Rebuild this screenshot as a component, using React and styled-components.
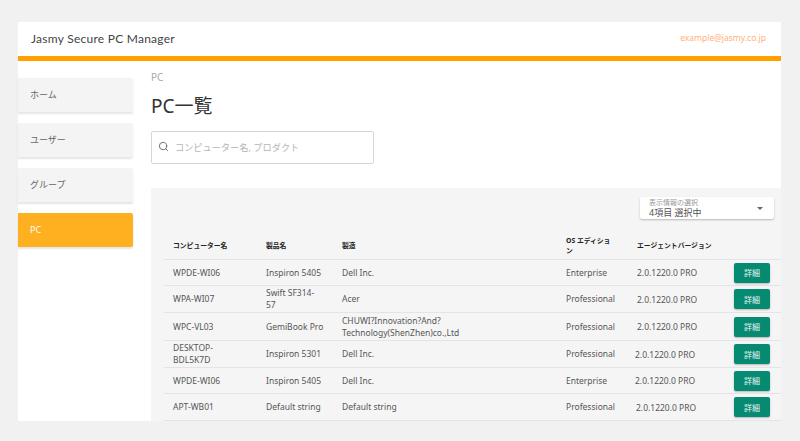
import React from 'react';
import styled, { createGlobalStyle } from 'styled-components';
import { Search } from 'lucide-react';

const GlobalStyle = createGlobalStyle`
  html, body {
    margin: 0;
    padding: 0;
    background: #f1f1f1;
  }
`;

const navItems = ['ホーム', 'ユーザー', 'グループ', 'PC'];

const pcRows = [
  { name: 'WPDE-WI06', product: 'Inspiron 5405', maker: 'Dell Inc.', os: 'Enterprise', shift: 0, h: 26 },
  { name: 'WPA-WI07', product: 'Swift SF314-57', maker: 'Acer', os: 'Professional', shift: 0, h: 27 },
  { name: 'WPC-VL03', product: 'GemiBook\u00a0Pro', maker: 'CHUWI?Innovation?And?Technology(ShenZhen)co.,Ltd', os: 'Professional', shift: 0, h: 28 },
  { name: 'DESKTOP-BDL5K7D', product: 'Inspiron 5301', maker: 'Dell Inc.', os: 'Professional', shift: -2, h: 27 },
  { name: 'WPDE-WI06', product: 'Inspiron 5405', maker: 'Dell Inc.', os: 'Enterprise', shift: -2, h: 26 },
  { name: 'APT-WB01', product: 'Default string', maker: 'Default string', os: 'Professional', shift: -1, h: 27 },
];

const App = () => (
  <Page>
    <GlobalStyle />
    <Window>
      <Header>
        <Brand>Jasmy Secure PC Manager</Brand>
        <Email>example@jasmy.co.jp</Email>
      </Header>
      <Body>
        <Sidebar>
          {navItems.map((item) => (
            <NavItem key={item} $active={item === 'PC'}>{item}</NavItem>
          ))}
        </Sidebar>
        <Main>
          <Crumb>PC</Crumb>
          <Title>PC一覧</Title>
          <SearchBox>
            <Search size={11} strokeWidth={2} color="#666" />
            <SearchHint>コンピューター名, プロダクト</SearchHint>
          </SearchBox>
          <Panel>
            <PanelTop>
              <ColumnSelect>
                <SelectLabel>表示情報の選択</SelectLabel>
                <SelectValue>4項目 選択中</SelectValue>
                <Caret />
              </ColumnSelect>
            </PanelTop>
            <Table>
              <colgroup>
                <col style={{ width: 93 }} />
                <col style={{ width: 76 }} />
                <col style={{ width: 224 }} />
                <col style={{ width: 71 }} />
                <col style={{ width: 98 }} />
                <col />
              </colgroup>
              <thead>
                <tr>
                  <HeadCell>コンピューター名</HeadCell>
                  <HeadCell>製品名</HeadCell>
                  <HeadCell>製造</HeadCell>
                  <HeadCell $narrow>OS エディション</HeadCell>
                  <HeadCell>エージェントバージョン</HeadCell>
                  <HeadCell />
                </tr>
              </thead>
              <tbody>
                {pcRows.map((row, index) => (
                  <tr key={index} style={{ height: row.h }}>
                    <Cell>{row.name}</Cell>
                    <ProductCell>{row.product}</ProductCell>
                    <MakerCell>{row.maker}</MakerCell>
                    <Cell>{row.os}</Cell>
                    <Cell>
                      <Version $shift={row.shift}>2.0.1220.0 PRO</Version>
                    </Cell>
                    <ActionCell>
                      <DetailButton>詳細</DetailButton>
                    </ActionCell>
                  </tr>
                ))}
              </tbody>
            </Table>
          </Panel>
        </Main>
      </Body>
    </Window>
  </Page>
);

const Page = styled.div`
  width: 800px;
  height: 441px;
  padding: 22px 19px 20px 18px;
  box-sizing: border-box;
  overflow: hidden;
  background: #f1f1f1;
  font-family: "Noto Sans", "Noto Sans CJK JP", sans-serif;
`;

const Window = styled.div`
  height: 399px;
  background: #fff;
  display: flex;
  flex-direction: column;
`;

const Header = styled.header`
  height: 34px;
  flex: none;
  box-sizing: content-box;
  border-bottom: 5px solid #ffa000;
  display: flex;
  align-items: center;
  justify-content: space-between;
  padding: 0 15px 0 13px;
`;

const Brand = styled.div`
  font-family: Lato, "Noto Sans", sans-serif;
  font-size: 12px;
  letter-spacing: 0.25px;
  color: #444;
  margin-top: -2px;
`;

const Email = styled.div`
  font-size: 8.5px;
  color: #ffb27a;
  margin-top: -3px;
`;

const Body = styled.div`
  flex: 1;
  min-height: 0;
  display: flex;
`;

const Sidebar = styled.nav`
  width: 115px;
  flex: none;
  padding-top: 17px;
  display: flex;
  flex-direction: column;
  gap: 11px;
`;

const NavItem = styled.div`
  height: 34px;
  box-sizing: border-box;
  padding: 0 0 2px 12px;
  display: flex;
  align-items: center;
  font-size: 9px;
  background: ${({ $active }) => ($active ? '#ffb020' : '#f4f4f4')};
  color: ${({ $active }) => ($active ? '#fff' : '#666')};
  border-radius: 0 2px 2px 0;
  box-shadow: 0 2px 2px rgba(0, 0, 0, 0.1);
`;

const Main = styled.main`
  flex: 1;
  min-width: 0;
  margin-left: 18px;
  display: flex;
  flex-direction: column;
`;

const Crumb = styled.div`
  margin-top: 9px;
  height: 14px;
  line-height: 14px;
  font-size: 10px;
  color: #aaa;
`;

const Title = styled.h1`
  margin: 8px 0 0;
  height: 28px;
  line-height: 28px;
  font-size: 19px;
  font-weight: 400;
  color: #333;
`;

const SearchBox = styled.div`
  margin-top: 11px;
  width: 223px;
  height: 33px;
  box-sizing: border-box;
  flex: none;
  border: 1px solid #d6d6d6;
  border-radius: 2px;
  display: flex;
  align-items: center;
  gap: 6px;
  padding: 0 0 2px 6px;
`;

const SearchHint = styled.span`
  font-size: 9.2px;
  color: #b5b5b5;
`;

const Panel = styled.section`
  margin-top: 24px;
  flex: 1;
  min-height: 0;
  background: #f5f5f5;
  padding-left: 13px;
  overflow: hidden;
`;

const PanelTop = styled.div`
  display: flex;
  justify-content: flex-end;
  padding: 9px 7px 0 0;
  height: 22px;
`;

const ColumnSelect = styled.div`
  position: relative;
  width: 134px;
  height: 22px;
  box-sizing: border-box;
  padding: 2px 0 0 9px;
  background: #fff;
  border-radius: 2px;
  box-shadow: 0 1px 2px rgba(0, 0, 0, 0.25);
`;

const SelectLabel = styled.div`
  font-size: 7px;
  line-height: 8px;
  color: #999;
`;

const SelectValue = styled.div`
  font-size: 9px;
  line-height: 12px;
  color: #555;
`;

const Caret = styled.span`
  position: absolute;
  right: 11px;
  top: 10px;
  border-left: 3px solid transparent;
  border-right: 3px solid transparent;
  border-top: 3px solid #666;
`;

const Table = styled.table`
  width: 617px;
  margin-top: 13px;
  table-layout: fixed;
  border-collapse: collapse;
`;

const HeadCell = styled.th`
  height: 27px;
  padding: 0 ${({ $narrow }) => ($narrow ? '16px' : '9px')} 0 9px;
  text-align: left;
  vertical-align: middle;
  font-size: 6.8px;
  line-height: 10px;
  font-weight: 700;
  color: #222;
  white-space: ${({ $narrow }) => ($narrow ? 'normal' : 'nowrap')};
  border-bottom: 1px solid #e4e4e4;
`;

const Cell = styled.td`
  padding: 0 9px;
  font-size: 8.5px;
  line-height: 12px;
  color: #555;
  border-bottom: 1px solid #e4e4e4;
  overflow-wrap: anywhere;
`;

const ProductCell = styled(Cell)`
  padding-right: 10px;
  overflow-wrap: normal;
`;

const MakerCell = styled(Cell)`
  padding-right: 60px;
`;

const ActionCell = styled(Cell)`
  padding: 0 0 0 8px;
`;

const Version = styled.span`
  display: block;
  white-space: nowrap;
  margin-top: 1px;
  margin-left: ${({ $shift }) => $shift}px;
`;

const DetailButton = styled.button`
  display: block;
  width: 36px;
  height: 20px;
  padding: 0;
  border: 0;
  border-radius: 2px;
  background: #078a72;
  color: #e6f3f0;
  font-family: inherit;
  font-size: 8px;
  box-shadow: 0 1px 2px rgba(0, 0, 0, 0.25);
`;

export default App;
